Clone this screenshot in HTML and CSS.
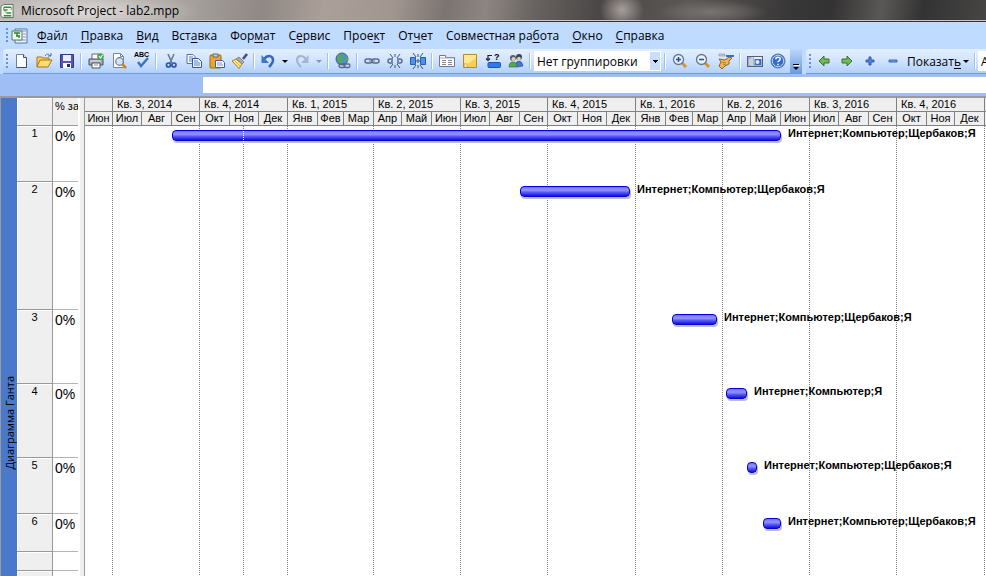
FILE: index.html
```html
<!DOCTYPE html>
<html lang="ru">
<head>
<meta charset="utf-8">
<title>Microsoft Project - lab2.mpp</title>
<link rel="stylesheet" href="styles.css">
</head>
<body>
<header class="titlebar">
  <svg class="app-icon" viewBox="0 0 16 16"><path d="M1 3l3-2h10v14H3L1 13z" fill="#f2f6ee" stroke="#57705a"/><path d="M4 4h8M4 7h4M7 10h5M4 13h8" stroke="#3d8a3c" stroke-width="1.6"/><path d="M4 4v3l3 3M12 4v3" fill="none" stroke="#6f8f6c"/></svg>
  <h1>Microsoft Project - lab2.mpp</h1>
</header>
<nav class="menubar">
  <i class="grip"></i>
  <svg class="doc-icon" viewBox="0 0 18 16"><path d="M4 1h12v14H4z" fill="#eef4ff" stroke="#5672a8"/><path d="M5 3h10M12 6h3M12 9h3M6 12h9" stroke="#7c96c8"/><path d="M1 3h10v9H1z" fill="#f4f8f0" stroke="#4f7f55"/><path d="M3 5h6M6 5v3M5 8h4M8 8v2" stroke="#2e7d32" fill="none" stroke-width="1.3"/></svg>
  <a href="#"><u>Ф</u>айл</a><a href="#"><u>П</u>равка</a><a href="#"><u>В</u>ид</a><a href="#">Вст<u>а</u>вка</a><a href="#">Фор<u>м</u>ат</a><a href="#">С<u>е</u>рвис</a><a href="#">Прое<u>к</u>т</a><a href="#">От<u>ч</u>ет</a><a href="#">Совместная ра<u>б</u>ота</a><a href="#"><u>О</u>кно</a><a href="#"><u>С</u>правка</a>
</nav>
<div class="toolbars">
  <div class="toolbar">
    <i class="grip"></i>
    <button aria-label="Создать"><svg viewBox="0 0 16 16"><path d="M3.500 1.500h7l3 3v10h-10z" fill="#fff" stroke="#6d83ad"/><path d="M13.500 5v9.500h-10" fill="none" stroke="#3c4f76"/><path d="M10.500 1.500v3h3" fill="#d5e2f7" stroke="#3c4f76"/></svg></button>
    <button aria-label="Открыть"><svg viewBox="0 0 16 16"><path d="M1 14V4h5l1 1h6v3" fill="#f7d16a" stroke="#a87513"/><path d="M1 14l3-7h12l-4 7z" fill="#ffdc72" stroke="#a87513"/><path d="M9 3c2-3 4-2 5 0m-2 0h3V0" fill="none" stroke="#4d6c99"/></svg></button>
    <button aria-label="Сохранить"><svg viewBox="0 0 16 16"><path d="M1.500 1.500h13v13h-13z" fill="#5454ba" stroke="#34348c"/><path d="M4 2h8v6H4z" fill="#e9edfa"/><path d="M4 10h8v5H4z" fill="#fff"/><path d="M8 11h3v3H8z" fill="#28286e"/></svg></button>
    <i class="sep"></i>
    <button aria-label="Печать"><svg viewBox="0 0 16 16"><path d="M4 1h7v6H4z" fill="#fff" stroke="#667"/><path d="M1 6h14v6H1z" fill="#a6aab4" stroke="#4b505c"/><path d="M2 8h11" stroke="#e6e8ed"/><path d="M4 10h8v5H4z" fill="#fff" stroke="#4b505c"/><path d="M6 12h4" stroke="#889"/><circle cx="12.500" cy="3.500" r="3.300" fill="#43a547"/><path d="M11 3l1.500 2 2-3" fill="none" stroke="#fff" stroke-width="1.200"/></svg></button>
    <button aria-label="Предварительный просмотр"><svg viewBox="0 0 16 16"><path d="M2.500.500h7l3 3v11h-10z" fill="#fff" stroke="#7486a8"/><path d="M9.500.500v3h3" fill="none" stroke="#7486a8"/><circle cx="8.500" cy="8.500" r="3.800" fill="#cfe4f6" stroke="#6d7c92" stroke-width="1.200"/><path d="M11 11l4 4" stroke="#c98516" stroke-width="2.500"/></svg></button>
    <button aria-label="Орфография"><svg viewBox="0 0 16 16"><text x="0" y="4" class="abc">ABC</text><path d="M4 9l3 4 7-8" fill="none" stroke="#3f73c6" stroke-width="2.500"/></svg></button>
    <i class="sep"></i>
    <button aria-label="Вырезать"><svg viewBox="0 0 16 16"><path d="M5 1l4 9M11 1L7 10" stroke="#6e7a90" stroke-width="1.600"/><circle cx="5.500" cy="12" r="2" fill="none" stroke="#2956b2" stroke-width="1.700"/><circle cx="11" cy="12" r="2" fill="none" stroke="#2956b2" stroke-width="1.700"/></svg></button>
    <button aria-label="Копировать"><svg viewBox="0 0 16 16"><path d="M1 1.500h6l2 2v7H1z" fill="#f4f8ff" stroke="#5275b5"/><path d="M3 4h4M3 6h4M3 8h4" stroke="#5b86cf"/><path d="M6.500 5.500h6l3 3v6h-9z" fill="#eaf1ff" stroke="#34589e"/><path d="M8 8h4M8 10h6M8 12h6" stroke="#5b86cf"/></svg></button>
    <button aria-label="Вставить"><svg viewBox="0 0 16 16"><rect x="1" y="2" width="11" height="13" rx="1" fill="#e9a72e" stroke="#9a6914"/><path d="M4 1h5v3H4z" fill="#c9cdd6" stroke="#666"/><path d="M6.500 7.500h7l2 2v5h-9z" fill="#f4f8ff" stroke="#4a5f8f"/><path d="M8 10h5M8 12h6" stroke="#7c9ad2"/></svg></button>
    <button aria-label="Формат по образцу"><svg viewBox="0 0 16 16"><path d="M15 1l-4 5" stroke="#4a4a80" stroke-width="2.600"/><path d="M7 4l5 5-2 2-6-5z" fill="#a5a9b5" stroke="#596071" stroke-width=".600"/><path d="M4 6l6 5-3 4.500L0 8z" fill="#f9e48c" stroke="#a8801e"/><path d="M3 8l5 5" stroke="#dbb44c"/></svg></button>
    <i class="sep"></i>
    <button class="narrow" aria-label="Отменить"><svg viewBox="0 0 16 16"><path d="M4 6c4-5 9-3 9 1 0 3-2 5-4 7" fill="none" stroke="#3565bd" stroke-width="2.500"/><path d="M1.500 2v8H9z" fill="#3f73cc"/></svg></button>
    <button class="drop" aria-label="Список отмены"></button>
    <button class="narrow" aria-label="Вернуть"><svg viewBox="0 0 16 16"><path d="M12 6C8 1 3 3 3 7c0 3 2 5 4 7" fill="none" stroke="#a5b6d2" stroke-width="2.200"/><path d="M14.500 2v8H7z" fill="#a5b6d2"/></svg></button>
    <button class="drop dim" aria-label="Список возврата"></button>
    <i class="sep"></i>
    <button aria-label="Гиперссылка"><svg viewBox="0 0 16 16"><circle cx="7" cy="6" r="6" fill="#4e8fd8" stroke="#37618f"/><path d="M3 2c3-2 5-1 6 1L6 6l2 3-2 2-4-4zM10 5l3-1v4l-2 1z" fill="#56a94e"/><rect x="4" y="11" width="6" height="3.500" rx="1.700" fill="none" stroke="#566883" stroke-width="1.300"/><rect x="9" y="11" width="6" height="3.500" rx="1.700" fill="none" stroke="#566883" stroke-width="1.300"/></svg></button>
    <i class="sep"></i>
    <button aria-label="Связать задачи"><svg viewBox="0 0 16 16"><g fill="none" stroke="#586b8c" stroke-width="1.500"><rect x="1" y="6" width="7" height="4" rx="2"/><rect x="8" y="6" width="7" height="4" rx="2"/></g><path d="M5 8h6" stroke="#73839e" stroke-width="1.200"/></svg></button>
    <button aria-label="Разорвать связи"><svg viewBox="0 0 16 16"><path d="M6 6H3Q1 6 1 8t2 2h3M10 6h3q2 0 2 2t-2 2h-3M4 8h2M10 8h2" fill="none" stroke="#586b8c" stroke-width="1.500"/><path d="M8 1v3M8 12v3M3 1l3 4M13 1l-3 4M3 15l3-4M13 15l-3-4" stroke="#3b5578"/></svg></button>
    <button aria-label="Прервать задачу"><svg viewBox="0 0 16 16"><path d="M.500 4.500h5v7h-5zM10.500 4.500h5v7h-5z" fill="#4d91ed" stroke="#265cb4"/><path d="M8 1v3M8 12v3M8 6v4M3 0l3 4M13 0l-3 4M3 16l3-4M13 16l-3-4M6 8h4" stroke="#3b5578"/></svg></button>
    <i class="sep"></i>
    <button aria-label="Сведения о задаче"><svg viewBox="0 0 16 16"><path d="M.500 2.500h6v2h9v9H.500z" fill="#fff" stroke="#77798a"/><path d="M1 5h14" stroke="#9cabc4"/><path d="M3 7.500h4M3 9.500h4M3 11.500h4M9 7.500h4M9 9.500h4M9 11.500h4" stroke="#858994"/></svg></button>
    <button aria-label="Заметки"><svg viewBox="0 0 16 16"><path d="M1.500 1.500h13v13h-13z" fill="#f8cf4e" stroke="#b8892a"/><path d="M2 2h12v3L7 10 2 11z" fill="#fde893"/><path d="M2 14l1-4 3 4z" fill="#fff6cd" stroke="#b8892a" stroke-width=".500"/></svg></button>
    <button aria-label="Назначить ресурс"><svg viewBox="0 0 16 16"><rect x="3" y="9.500" width="12.500" height="5" rx="1" fill="#2f7af2" stroke="#1e54b0"/><path d="M7 2.500H3v5M1 5.500l2 2 2-2" fill="none" stroke="#222" stroke-width="1.200"/><text x="9" y="7" class="ask">?</text></svg></button>
    <button aria-label="Ресурсы"><svg viewBox="0 0 16 16"><circle cx="5" cy="5" r="3" fill="#585c60"/><circle cx="11" cy="4" r="3" fill="#3f4348"/><circle cx="5.500" cy="6" r="2" fill="#d8d0c0"/><circle cx="11" cy="5.500" r="1.800" fill="#d8d0c0"/><path d="M8 12q0-4 3-4t4 5l-6 1z" fill="#4775cf" stroke="#2e4d96" stroke-width=".700"/><path d="M1 14q0-5 4-5t4 5z" fill="#56a84c" stroke="#36702f" stroke-width=".700"/></svg></button>
    <i class="sep"></i>
    <select class="group-select" aria-label="Группировка"><option>Нет группировки</option></select>
    <i class="sep"></i>
    <button aria-label="Увеличить"><svg viewBox="0 0 16 16"><path d="M10 10l4 4" stroke="#d1962e" stroke-width="3"/><circle cx="6.500" cy="6.500" r="5" fill="#e6f1fc" stroke="#67778f" stroke-width="1.300"/><path d="M4 6.500h5M6.500 4v5" stroke="#294e92" stroke-width="1.500"/></svg></button>
    <button aria-label="Уменьшить"><svg viewBox="0 0 16 16"><path d="M10 10l4 4" stroke="#d1962e" stroke-width="3"/><circle cx="6.500" cy="6.500" r="5" fill="#e6f1fc" stroke="#67778f" stroke-width="1.300"/><path d="M4 6.500h5" stroke="#294e92" stroke-width="1.500"/></svg></button>
    <button aria-label="Перейти к задаче"><svg viewBox="0 0 16 16"><path d="M1 1h6v2H1z" fill="#c3cad6" stroke="#7b8799" stroke-width=".500"/><path d="M8 2h8v2H8z" fill="#356fd2"/><path d="M1 6l6 1 4-3 3 1-3 3v3l-4 2-3 3-3-3 2-4z" fill="#edb651" stroke="#93641b"/><path d="M4 9l4 1M5 11l3 1" stroke="#93641b" stroke-width=".700"/></svg></button>
    <i class="sep"></i>
    <button aria-label="Копировать рисунок"><svg viewBox="0 0 16 16"><rect x=".500" y="3.500" width="15" height="10" fill="#a7b2c5" stroke="#536179"/><path d="M2 2h3M3 6v6M5 4v9" stroke="#eff2f7"/><path d="M7 4h8v2H7z" fill="#e8eef8"/><rect x="8" y="6" width="6" height="6" fill="#356cc6"/><circle cx="10.500" cy="9" r="2" fill="#dceaff"/></svg></button>
    <button aria-label="Справка"><svg viewBox="0 0 16 16"><circle cx="8" cy="8" r="7" fill="#2f6bd0" stroke="#5876ac"/><circle cx="8" cy="8" r="5.700" fill="none" stroke="#cfe0fb" stroke-width=".900"/><path d="M5.800 6.300q0-2 2.200-2t2.200 1.800q0 1-1.200 1.700T8 9.300M8 10.700v1.500" fill="none" stroke="#fff" stroke-width="1.500"/></svg></button>
    <button class="overflow" aria-label="Параметры панели"></button>
  </div>
  <div class="toolbar second">
    <i class="grip"></i>
    <button aria-label="На уровень выше"><svg viewBox="0 0 16 16"><path d="M3 8l5-5v3h5v4H8v3z" fill="#72ba52" stroke="#39702e"/></svg></button>
    <button aria-label="На уровень ниже"><svg viewBox="0 0 16 16"><path d="M13 8L8 3v3H3v4h5v3z" fill="#72ba52" stroke="#39702e"/></svg></button>
    <button aria-label="Показать подзадачи"><svg viewBox="0 0 16 16"><path d="M7 4h2v3h3v2H9v3H7V9H4V7h3z" fill="#5189e5" stroke="#2d59aa"/></svg></button>
    <button aria-label="Скрыть подзадачи"><svg viewBox="0 0 16 16"><path d="M4 7h8v2H4z" fill="#6b9aec" stroke="#4068b2"/></svg></button>
    <button class="show"><span>Показат<u>ь</u></span></button>
    <i class="sep"></i>
    <select class="font-select" aria-label="Шрифт"><option>Arial</option></select>
  </div>
</div>
<div class="entrybar"><input aria-label="Строка ввода"></div>
<main class="workspace">
  <aside class="view-label"><span>Диаграмма Ганта</span></aside>
  <table class="tasks">
    <thead><tr><th></th><th>% за</th></tr></thead>
    <tbody>
      <tr class="h3"><th>1</th><td>0%</td></tr>
      <tr class="h7"><th>2</th><td>0%</td></tr>
      <tr class="h4"><th>3</th><td>0%</td></tr>
      <tr class="h4"><th>4</th><td>0%</td></tr>
      <tr class="h3"><th>5</th><td>0%</td></tr>
      <tr class="h2"><th>6</th><td>0%</td></tr>
      <tr class="h1"><th></th><td></td></tr>
      <tr class="h1"><th></th><td></td></tr>
    </tbody>
  </table>
  <div class="splitter"></div>
  <section class="chart">
    <div class="months scale">
      <b class="one"></b><b>Кв. 3, 2014</b><b>Кв. 4, 2014</b><b>Кв. 1, 2015</b><b>Кв. 2, 2015</b><b>Кв. 3, 2015</b><b>Кв. 4, 2015</b><b>Кв. 1, 2016</b><b>Кв. 2, 2016</b><b>Кв. 3, 2016</b><b>Кв. 4, 2016</b><b class="one"></b>
      <span>Июн</span><span>Июл</span><span>Авг</span><span>Сен</span><span>Окт</span><span>Ноя</span><span>Дек</span><span>Янв</span><span>Фев</span><span>Мар</span><span>Апр</span><span>Май</span><span>Июн</span><span>Июл</span><span>Авг</span><span>Сен</span><span>Окт</span><span>Ноя</span><span>Дек</span><span>Янв</span><span>Фев</span><span>Мар</span><span>Апр</span><span>Май</span><span>Июн</span><span>Июл</span><span>Авг</span><span>Сен</span><span>Окт</span><span>Ноя</span><span>Дек</span><span></span>
    </div>
    <div class="plot">
      <div class="months lines"><i class="one"></i><i></i><i></i><i></i><i></i><i></i><i></i><i></i><i></i><i></i><i></i></div>
      <div class="status-date" style="left:158px"></div>
      <div class="row h3"><div class="bar" style="margin-left:87px;width:609px"></div><span>Интернет;Компьютер;Щербаков;Я</span></div>
      <div class="row h7"><div class="bar" style="margin-left:435px;width:110px"></div><span>Интернет;Компьютер;Щербаков;Я</span></div>
      <div class="row h4"><div class="bar" style="margin-left:587px;width:45px"></div><span>Интернет;Компьютер;Щербаков;Я</span></div>
      <div class="row h4"><div class="bar" style="margin-left:641px;width:21px"></div><span>Интернет;Компьютер;Я</span></div>
      <div class="row h3"><div class="bar" style="margin-left:662px;width:10px"></div><span>Интернет;Компьютер;Щербаков;Я</span></div>
      <div class="row h2"><div class="bar" style="margin-left:678px;width:18px"></div><span>Интернет;Компьютер;Щербаков;Я</span></div>
      <div class="status-date over" style="left:158px"></div>
    </div>
  </section>
</main>
</body>
</html>
```
FILE: styles.css
```css
* { box-sizing: border-box; }
body {
  margin: 0;
  height: 100vh;
  overflow: hidden;
  display: flex;
  flex-direction: column;
  background: #9ebef5;
  color: #000;
  font: 12px "Open Sans", "Noto Sans", sans-serif;
}
button, select, input { font: inherit; color: inherit; border: 0; padding: 0; margin: 0; background: none; border-radius: 0; }
a { color: inherit; text-decoration: none; }
svg { display: block; }
u { text-underline-offset: 2px; }

.titlebar {
  flex: none;
  height: 22px;
  display: flex;
  align-items: center;
  gap: 6px;
  border-bottom: 1px solid #333;
  box-shadow: inset 0 -1px #c9c7c6;
  background:
    radial-gradient(ellipse 110px 22px at 90px 12px, rgba(240,238,236,.7), rgba(240,238,236,0)),
    radial-gradient(ellipse 22px 20px at 622px 10px, rgba(190,180,176,.8), rgba(190,180,176,0)),
    radial-gradient(ellipse 55px 12px at 712px 12px, rgba(130,125,122,.8), rgba(130,125,122,0)),
    linear-gradient(100deg, #b7b4b2 0, #a9a39f 180px, #8f8884 260px, #ab9f99 320px, #a0958f 390px, #7b7470 440px, #8d8581 480px, #67625f 530px, #4a4746 590px, #5c5856 680px, #383737 780px, #343333 820px, #5a5856 870px, #333 910px, #4a4847 986px);
}
.titlebar h1 { margin: 0; font-size: 12px; font-weight: 400; }
.app-icon { width: 15px; height: 16px; }

.menubar {
  flex: none;
  height: 27px;
  display: flex;
  align-items: center;
  gap: 13px;
  padding-left: 6px;
  background: #bfdbff;
}
.grip { flex: none; width: 2px; height: 15px; background: repeating-linear-gradient(#6593cf 0 2px, transparent 2px 4px); }
.menubar .grip { margin-right: -10px; }
.doc-icon { width: 18px; height: 16px; margin-right: -5px; }

.toolbars { flex: none; display: flex; height: 25px; gap: 4px; padding-left: 3px; background: #bfdbff; }
.toolbar {
  flex: none;
  display: flex;
  align-items: center;
  padding-left: 3px;
  background: linear-gradient(#e3efff, #d0e3ff 50%, #b1d0fb);
  border-bottom: 1px solid #6f9dd9;
  border-radius: 4px 0 0 0;
}
.toolbar.second { flex: 1; min-width: 0; overflow: hidden; }
.toolbar button { flex: none; width: 23px; height: 22px; display: flex; align-items: center; justify-content: center; }
.toolbar button svg { width: 16px; height: 16px; overflow: visible; }
.toolbar .grip + button { margin-left: 1px; }
.toolbar .narrow { width: 21px; }
.toolbar .drop { width: 13px; }
.toolbar .drop::after, .show::after { content: ""; border: 3px solid transparent; border-top-color: #000; border-bottom: 0; }
.toolbar .dim::after { border-top-color: #8795ac; }
.toolbar .show { width: 68px; gap: 2px; }
.sep { flex: none; width: 1px; height: 16px; margin: 0 3px 0 2px; background: #9ac1f0; box-shadow: 1px 0 #fff; }
.abc { font: bold 7px "Liberation Sans", sans-serif; }
.ask { font: bold 9px "Liberation Sans", sans-serif; }
.toolbar select {
  appearance: none;
  flex: none;
  height: 20px;
  padding-left: 2px;
  border: 1px solid #fff;
}
.toolbar .group-select {
  width: 127px;
  margin: 0 1px;
  background:
    linear-gradient(#000, #000) 118px 8px / 5px 1px no-repeat,
    linear-gradient(#000, #000) 119px 9px / 3px 1px no-repeat,
    linear-gradient(#000, #000) 120px 10px / 1px 1px no-repeat,
    linear-gradient(90deg, #fff 115px, #c9deff 115px);
}
.toolbar .font-select { width: 100px; background: #fff; }
.toolbar .overflow {
  width: 12px;
  height: 24px;
  margin-left: 1px;
  padding-bottom: 3px;
  flex-direction: column;
  justify-content: flex-end;
  gap: 2px;
  background: linear-gradient(#bcd6fb, #6b9be0);
}
.overflow::before { content: ""; width: 6px; height: 1px; background: #000; box-shadow: 1px 1px #fff; }
.overflow::after { content: ""; border: 3px solid transparent; border-top-color: #000; border-bottom: 0; }

.entrybar { flex: none; height: 22px; padding: 3px 0 3px 203px; display: flex; }
.entrybar input { flex: 1; min-width: 0; background: #fff; }

.workspace {
  flex: 1;
  min-height: 0;
  display: flex;
  overflow: hidden;
  border-top: 2px solid #9a9a9a;
  border-left: 1px solid #9a9a9a;
  background: #fff;
  font-family: "Liberation Sans", sans-serif;
}
.view-label { flex: none; width: 16px; display: flex; align-items: flex-end; justify-content: center; padding-bottom: 107px; background: #4a79cb; }
.view-label span { writing-mode: vertical-rl; transform: rotate(180deg); font: 11px "Open Sans", sans-serif; white-space: nowrap; }

.tasks { flex: none; width: 61px; align-self: flex-start; table-layout: fixed; border-collapse: separate; border-spacing: 0; }
.tasks th, .tasks td { padding: 2px 0 0 2px; vertical-align: top; border-bottom: 1px solid #b4b4b4; overflow: hidden; white-space: nowrap; }
.tasks th { font-size: 11px; font-weight: 400; line-height: 13px; background: #efefef; border-bottom-color: #999; }
.tasks th:first-child { width: 36px; padding: 1px 0 0; border-right: 1px solid #999; box-shadow: inset 1px 1px #fff; }
.tasks thead th { height: 28px; }
.tasks thead th + th { text-align: left; }
.tasks td { font-size: 14px; line-height: 16px; }
.h1 { height: 19px; }
.h2 { height: 38px; }
.h3 { height: 56px; }
.h4 { height: 74px; }
.h7 { height: 128px; }
.splitter { flex: none; width: 7px; background: #efefef; border-left: 2px solid #fff; border-right: 1px solid #999; }

.chart { flex: 1; min-width: 0; overflow: hidden; display: flex; flex-direction: column; }
.months {
  display: grid;
  grid-template-columns: 28px 29px 30px 28px 30px 29px 29px 30px 26px 30px 28px 30px 29px 29px 30px 28px 30px 29px 29px 30px 27px 30px 28px 30px 29px 29px 30px 28px 30px 28px 30px 30px;
}
.scale { flex: none; grid-template-rows: 14px 14px; background: #efefef; }
.scale b, .scale span { border-right: 1px solid #808080; border-bottom: 1px solid #808080; font-size: 11px; font-weight: 400; line-height: 13px; white-space: nowrap; }
.scale b { grid-column: span 3; padding-left: 4px; }
.scale span { text-align: center; }
.months .one { grid-column: span 1; padding-left: 0; }
.plot { flex: 1; position: relative; }
.lines { position: absolute; inset: 0; }
.lines i { grid-column: span 3; background: repeating-linear-gradient(#808080 0 1px, transparent 1px 2px) right / 1px 100% no-repeat; }
.status-date { position: absolute; top: 0; bottom: 0; width: 1px; background: repeating-linear-gradient(#808080 0 1px, transparent 1px 2px); }
.status-date.over { background: repeating-linear-gradient(transparent 0 1px, #fff 1px 2px); }
.row { position: relative; display: flex; align-items: flex-start; gap: 7px; }
.row span { font-size: 11px; font-weight: 700; line-height: 13px; margin-top: 1px; white-space: nowrap; }
.bar {
  flex: none;
  height: 11px;
  margin-top: 4px;
  border: 1px solid #0000d8;
  border-radius: 4px;
  background: linear-gradient(#7272f0, #9494ff 35%, #5a5af6 60%, #1010e0);
  box-shadow: 1px 2px 0 #bdbdbd;
}
```
